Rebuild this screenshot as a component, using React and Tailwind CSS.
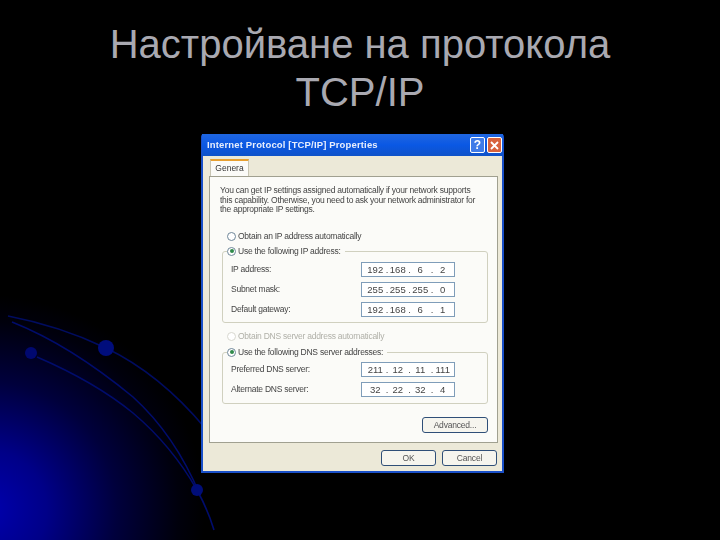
const sans = "font-['Liberation_Sans',Arial,sans-serif]";

function Radio({ checked, disabled }) {
  return (
    <span className={`flex w-[9px] h-[9px] shrink-0 items-center justify-center rounded-full border bg-white ${disabled ? "border-[#d8d8d0]" : "border-[#6f8799]"}`}>
      {checked && <span className="w-[4px] h-[4px] rounded-full bg-[#2f8a4a]" />}
    </span>
  );
}

function IpField({ parts }) {
  return (
    <div className="flex w-[94px] h-[15px] items-center border border-[#7f9db9] bg-white pl-[2px] text-[9.5px] text-[#444]">
      {parts.map((p, i) => (
        <div key={i} className="relative flex-1 text-center leading-none">
          {p}
          {i < 3 && <span className="absolute right-[-2px] top-0">.</span>}
        </div>
      ))}
    </div>
  );
}

function Row({ label, parts, className }) {
  return (
    <div className={`ml-[8px] flex items-center ${className || ""}`}>
      <span className="w-[130px] text-[8.5px] leading-none tracking-[-0.25px] text-[#444]">{label}</span>
      <IpField parts={parts} />
    </div>
  );
}

function XpButton({ children, className }) {
  return (
    <div className={`flex h-[16px] items-center justify-center rounded-[3px] border border-[#2f4f78] bg-[#f6f5ee] text-[8.5px] tracking-[-0.2px] text-[#555] ${className}`}>
      {children}
    </div>
  );
}

function Legend({ children }) {
  return (
    <legend className="ml-[4px] flex items-center gap-[2px] whitespace-nowrap bg-[#fbfbf8] pr-[4px] text-[8.5px] leading-[10px] tracking-[-0.25px] text-[#444]">
      <Radio checked />
      {children}
    </legend>
  );
}

function Dialog() {
  return (
    <div className="ml-[201px] mt-[18px] flex h-[339px] w-[303px] flex-col rounded-t-[3px] border-[2px] border-t-0 border-[#1a50c8] bg-[#ece9d8] blur-[0.35px]">
      <div className="-mx-[1px] flex h-[22px] items-center justify-between bg-gradient-to-b from-[#1f66e0] via-[#0a58e4] to-[#0f52c8] pl-[5px] pr-[1px]">
        <span className="text-[9.5px] font-semibold tracking-[0.15px] text-[#e8eefc]">Internet Protocol [TCP/IP] Properties</span>
        <div className="flex gap-[2px]">
          <div className="flex h-[16px] w-[15px] items-center justify-center rounded-[2px] border border-white bg-[#3f7be8] text-[12px] font-bold leading-none text-white">?</div>
          <div className="flex h-[16px] w-[15px] items-center justify-center rounded-[2px] border border-white bg-[#d8623c]">
            <svg width="9" height="9" viewBox="0 0 9 9"><path d="M1 1l7 7M8 1L1 8" stroke="#fff" strokeWidth="1.8" /></svg>
          </div>
        </div>
      </div>
      <div className="flex flex-1 flex-col px-[6px] pt-[3px]">
        <div className="ml-[1px] flex h-[17px] w-[39px] items-center justify-center border-x border-[#c8c5b4] border-t-2 border-t-[#e8a030] bg-[#fbfbf8] text-[8.5px] text-[#333]">Genera</div>
        <div className="flex h-[267px] w-[289px] flex-col border border-[#a0a090] bg-[#fbfbf8] pl-[10px] pr-[9px] pt-[9px]">
          <p className="whitespace-nowrap text-[8.5px] leading-[9.7px] tracking-[-0.24px] text-[#444]">
            You can get IP settings assigned automatically if your network supports<br />
            this capability. Otherwise, you need to ask your network administrator for<br />
            the appropriate IP settings.
          </p>
          <div className="ml-[7px] mt-[16px] flex items-center gap-[2px] text-[8.5px] leading-[10px] tracking-[-0.25px] text-[#444]">
            <Radio />
            Obtain an IP address automatically
          </div>
          <fieldset className="ml-[2px] mt-[5px] h-[77px] rounded-[3px] border border-[#d0d0bf]">
            <Legend>Use the following IP address:</Legend>
            <Row className="mt-[6px]" label="IP address:" parts={["192", "168", "6", "2"]} />
            <Row className="mt-[5px]" label="Subnet mask:" parts={["255", "255", "255", "0"]} />
            <Row className="mt-[5px]" label="Default gateway:" parts={["192", "168", "6", "1"]} />
          </fieldset>
          <div className="ml-[7px] mt-[8px] flex items-center gap-[2px] text-[8.5px] leading-[10px] tracking-[-0.25px] text-[#b0b0a8]">
            <Radio disabled />
            Obtain DNS server address automatically
          </div>
          <fieldset className="ml-[2px] mt-[6px] h-[57px] rounded-[3px] border border-[#d0d0bf]">
            <Legend>Use the following DNS server addresses:</Legend>
            <Row className="mt-[5px]" label="Preferred DNS server:" parts={["211", "12", "11", "111"]} />
            <Row className="mt-[5px]" label="Alternate DNS server:" parts={["32", "22", "32", "4"]} />
          </fieldset>
          <div className="mt-[13px] flex justify-end">
            <XpButton className="w-[66px]">Advanced...</XpButton>
          </div>
        </div>
        <div className="mr-[-1px] mt-[7px] flex justify-end gap-[6px]">
          <XpButton className="w-[55px]">OK</XpButton>
          <XpButton className="w-[55px]">Cancel</XpButton>
        </div>
      </div>
    </div>
  );
}

export default function App() {
  return (
    <div className={`relative h-[540px] w-[720px] overflow-hidden bg-black ${sans}`}>
      <div className="absolute inset-0 bg-[radial-gradient(ellipse_220px_215px_at_-15px_510px,#0000b0_0%,#000088_28%,#00003c_60%,#00000c_88%,#000000_100%)]" />
      <svg className="absolute inset-0 blur-[0.5px]" width="720" height="540" fill="none">
        <path d="M8 316Q60 326 106 348Q160 374 205 428" stroke="#000c60" strokeWidth="1.6" />
        <path d="M12 322Q70 345 133 397Q175 435 200 495" stroke="#000c6c" strokeWidth="1.6" />
        <path d="M37 357Q95 382 133 413Q172 446 197 490Q208 510 214 530" stroke="#000c6c" strokeWidth="1.6" />
        <circle cx="106" cy="348" r="8" fill="#000d7c" />
        <circle cx="31" cy="353" r="6" fill="#000870" />
        <circle cx="197" cy="490" r="6" fill="#000d78" />
      </svg>
      <div className="relative">
        <h1 className="pt-[20px] text-center text-[40px] font-normal leading-[48px] text-[#a9a9b1]">
          Настройване на протокола<br />TCP/IP
        </h1>
        <Dialog />
      </div>
    </div>
  );
}
